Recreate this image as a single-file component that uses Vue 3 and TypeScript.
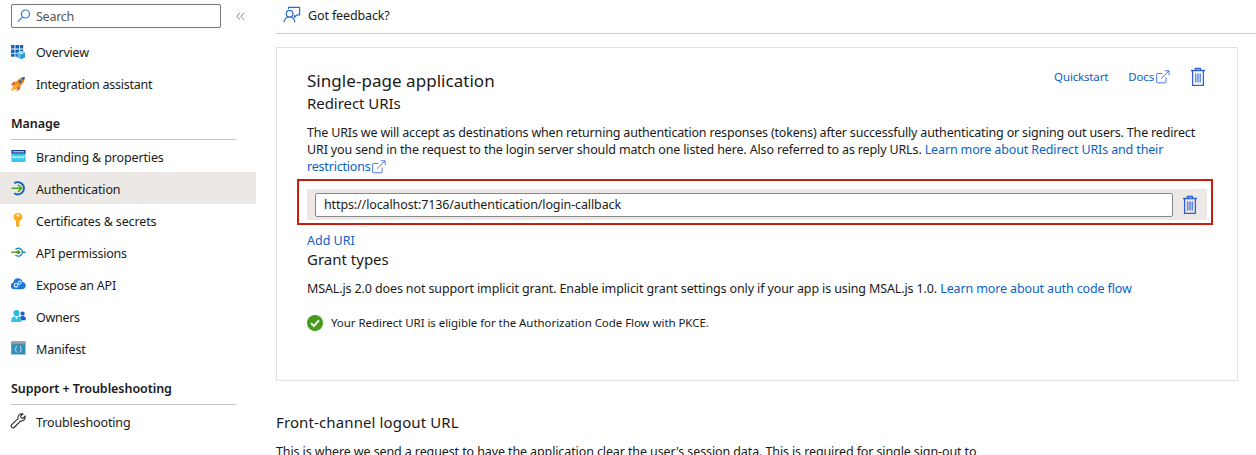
<script setup lang="ts">
interface NavItem {
  label: string
  icon: string
  spacing: number
  active?: boolean
}

const topItems: NavItem[] = [
  { label: 'Overview', icon: 'overview', spacing: -0.22 },
  { label: 'Integration assistant', icon: 'rocket', spacing: -0.24 },
]
const manageItems: NavItem[] = [
  { label: 'Branding & properties', icon: 'branding', spacing: -0.14 },
  { label: 'Authentication', icon: 'auth', spacing: -0.15, active: true },
  { label: 'Certificates & secrets', icon: 'key', spacing: -0.12 },
  { label: 'API permissions', icon: 'api', spacing: -0.24 },
  { label: 'Expose an API', icon: 'cloud', spacing: -0.23 },
  { label: 'Owners', icon: 'owners', spacing: -0.3 },
  { label: 'Manifest', icon: 'manifest', spacing: -0.2 },
]
const supportItems: NavItem[] = [{ label: 'Troubleshooting', icon: 'wrench', spacing: -0.13 }]

const sections = [
  { id: 'top', title: '', items: topItems },
  { id: 'manage', title: 'Manage', items: manageItems },
  { id: 'support', title: 'Support + Troubleshooting', items: supportItems },
]
</script>

<template>
  <svg class="defs" aria-hidden="true">
    <symbol id="trash" viewBox="0 0 16 20">
      <g fill="none" stroke="#2f62d9" stroke-width="1.3">
        <path d="M1 3.5H15M5.500 3.300V1.500H10.500V3.300M2.600 3.500V18.300H13.400V3.500" />
        <path d="M5.800 6.500V15.500M8 6.500V15.500M10.200 6.500V15.500" stroke-width="1.100" />
      </g>
    </symbol>
    <symbol id="external" viewBox="0 0 14 14">
      <path
        d="M6.300 3.400H1.500Q.7 3.400 .7 4.200V12Q.7 12.800 1.500 12.800H9.300Q10.100 12.800 10.100 12V7.400M5 8.700L12.900.9M8.700.8H13.100V5.100"
        fill="none"
        stroke="#4a78dc"
        stroke-width="1"
      />
    </symbol>
  </svg>

  <div class="page">
    <aside class="sidebar">
      <div class="search-row">
        <div class="search">
          <svg width="14" height="14" viewBox="0 0 14 14">
            <g fill="none" stroke="#3478d6" stroke-width="1.2">
              <circle cx="8.500" cy="5" r="4" />
              <path d="M5.600 7.900L.8 12.700" />
            </g>
          </svg>
          <span>Search</span>
        </div>
        <svg class="collapse" width="9" height="9" viewBox="0 0 9 9">
          <path d="M4 .7L.8 4.300L4 7.900M8 .7L4.800 4.300L8 7.900" fill="none" stroke="#777" stroke-width=".9" />
        </svg>
      </div>

      <nav v-for="section in sections" :key="section.id" :class="['section', section.id]">
        <h4 v-if="section.title">{{ section.title }}</h4>
        <div v-for="item in section.items" :key="item.label" :class="['item', { active: item.active }]">
          <svg width="16" height="16" viewBox="0 0 16 16">
            <g v-if="item.icon === 'overview'">
              <path
                d="M1 1h3.600v3.600H1zM5.400 1H9v3.600H5.400zM9.800 1h3.400v3.600H9.800zM1 5.400h3.600V9H1zM5.400 5.400H9V9H5.400zM9.800 5.400h3.400V9H9.800zM1 9.800h3.600v3H1zM5.400 9.800H9v3H5.400z"
                fill="#1765b5"
              />
              <path d="M11 6.700l4 2v4.500l-4 2-4-2V8.700z" fill="#55b5e8" />
              <path d="M11 6.700l4 2-4 2-4-2z" fill="#9edcf7" />
              <path d="M11 10.700l4-2v4.500l-4 2z" fill="#2d99d8" />
            </g>
            <g v-else-if="item.icon === 'rocket'">
              <path d="M2 11.500L.8 15.300L5.300 13.800z" fill="#fcbf2c" />
              <path d="M6 5.400L2.600 6.600L.9 9.800L4.700 9zM10.600 9.900L9.800 13.300L6.500 15.300L7.200 11.400z" fill="#e4572e" />
              <path d="M14.800 1C10.500 1.200 7 3.500 3.600 9.400L2.600 11.500L4.800 13.500L7 12.300C12.500 9 14.800 5.500 14.800 1z" fill="#f58b1f" />
              <path d="M14.900.9L10.900 1.900L13.800 5z" fill="#1665bd" />
              <circle cx="10.200" cy="5.600" r="1.600" fill="#1b65b4" />
              <path d="M7.300 8.600L3.500 12.600" stroke="#fcce45" stroke-width="1.200" />
            </g>
            <g v-else-if="item.icon === 'branding'">
              <path d="M1.500 2h14v12H1.500z" fill="#32cbef" />
              <path d="M1.500 2h14v3.500H1.500z" fill="#183b91" />
              <path d="M2.800 3.300h11.400v1H2.800z" fill="#e9f3ff" />
              <path
                d="M2.500 8l.9 2.200.9-2 .9 2 .8-2.200M6.700 8l.9 2.200.9-2 .9 2 .8-2.200M10.900 8l.9 2.200.9-2 .9 2 .9-2.200"
                fill="none"
                stroke="#dff8ff"
                stroke-width=".8"
              />
            </g>
            <g v-else-if="item.icon === 'auth'" fill="none">
              <path d="M4.300 3.300A6.100 6.100 0 1 1 4.300 13.300" stroke="#1562bd" stroke-width="2" />
              <path d="M1.500 8.300H11.500M8 4.700L11.600 8.300L8 11.900" stroke="#4ba51c" stroke-width="1.600" />
            </g>
            <g v-else-if="item.icon === 'key'">
              <path
                d="M8 .8C5.500.8 3.500 2.600 3.500 5C3.500 6.800 4.500 7.900 6 8.700V13.700L8 15.500L9.900 13.600L8.900 12.600L9.900 11.600L8.900 10.600L10 9.500V8.700C11.500 7.900 12.500 6.800 12.500 5C12.500 2.600 10.500.8 8 .8z"
                fill="#fbb429"
              />
              <circle cx="8" cy="3.200" r="1.200" fill="#fff5d4" />
              <path d="M5.700 6.300H10.300M7.200 9V13.500" stroke="#ed931c" stroke-width=".8" />
            </g>
            <g v-else-if="item.icon === 'api'" fill="none">
              <path d="M5.400 5.500A4 4 0 1 1 5.400 10.900M12.300 8.200H15.600" stroke="#2488b9" stroke-width="1.400" />
              <path d="M1.200 8.200H7" stroke="#58a32c" stroke-width="1.500" />
              <circle cx="8.300" cy="8.200" r="1.900" fill="#4c9c2a" />
            </g>
            <g v-else-if="item.icon === 'cloud'">
              <path
                d="M4 13.200C1.800 13.200.9 11.700.9 9.900C.9 8.200 1.700 7 3.200 6.800C3.400 4.200 5.400 2.300 8 2.300C10.300 2.300 12 3.900 12.700 6.100C14.500 6.400 15.800 7.800 15.800 9.500C15.800 11.600 14 13.200 11.900 13.200z"
                fill="#2275d7"
              />
              <circle cx="6.100" cy="9.300" r="1.800" fill="none" stroke="#e6f4ff" stroke-width="1.200" />
              <circle cx="9.700" cy="6.600" r="1.500" fill="none" stroke="#b6e1ff" stroke-width="1.100" />
            </g>
            <g v-else-if="item.icon === 'owners'">
              <circle cx="12.600" cy="5.600" r="2.100" fill="#255bc7" />
              <path d="M9.300 12.200V11C9.300 9.200 10.700 8 12.600 8S15.800 9.200 15.800 11V12.200z" fill="#1e5ac7" />
              <circle cx="6.500" cy="5" r="3.100" fill="#2bb9df" />
              <path d="M1.200 14V12C1.200 9.500 3.300 8 6.500 8S11.500 9.500 11.500 12V14z" fill="#35c3e8" />
              <path d="M4.800 8.100L6.500 11.500L8.200 8.100z" fill="#e6faff" />
            </g>
            <g v-else-if="item.icon === 'manifest'">
              <path d="M1.200 1.500h14.300v13H1.200z" fill="#348eb9" />
              <path d="M1.200 1.500h14.300v2.700H1.200z" fill="#999b9d" />
              <path
                d="M6.800 6.500Q5.800 6.500 5.800 7.500V8.500L5.100 9.300L5.800 10.100V11.100Q5.800 12.100 6.800 12.100M9.800 6.500Q10.800 6.500 10.800 7.500V8.500L11.500 9.300L10.800 10.100V11.100Q10.800 12.100 9.800 12.100"
                fill="none"
                stroke="#d8f1fb"
                stroke-width=".9"
              />
            </g>
            <path
              v-else
              d="M8 5.600A4 4 0 0 1 12.900 1L10.700 3.200L11.200 4.900L12.900 5.400L15.100 3.200A4.100 4.100 0 0 1 10.400 8.100L4.200 14.500A1.900 1.900 0 0 1 1.500 11.900z"
              fill="none"
              stroke="#2b2b2b"
              stroke-width="1.1"
            />
          </svg>
          <span :style="{ letterSpacing: item.spacing + 'px' }">{{ item.label }}</span>
        </div>
      </nav>
    </aside>

    <main class="content">
      <header class="toolbar">
        <svg width="18" height="18" viewBox="0 0 18 18">
          <g fill="none" stroke="#2d6bd1" stroke-width="1.200">
            <circle cx="6.600" cy="7.700" r="3.300" />
            <path d="M1 16.300C1.300 13.200 3.500 11 6.600 11S11.600 13.200 11.900 16.300M5.500 3.100V1.300H16.600V8.900H14.300L11.500 11.300V8.900" />
          </g>
        </svg>
        <span>Got feedback?</span>
      </header>

      <section class="card">
        <div class="card-head">
          <h2>Single-page application</h2>
          <div class="actions">
            <a class="quick">Quickstart</a>
            <a class="docs"><span>Docs</span><svg width="14" height="14"><use href="#external" /></svg></a>
            <svg class="bin" width="16" height="20"><use href="#trash" /></svg>
          </div>
        </div>
        <h3 class="redirect">Redirect URIs</h3>
        <p class="intro">
          <span class="l1">The URIs we will accept as destinations when returning authentication responses (tokens) after successfully authenticating or signing out users. The redirect</span><br />
          <span class="l2">URI you send in the request to the login server should match one listed here. Also referred to as reply URLs. <a>Learn more about Redirect URIs and their</a></span><br />
          <a class="l3">restrictions<svg width="14" height="14"><use href="#external" /></svg></a>
        </p>
        <div class="highlight">
          <div class="uri-row">
            <div class="uri"><span>https://localhost:7136/authentication/login-callback</span></div>
            <svg width="16" height="20"><use href="#trash" /></svg>
          </div>
        </div>
        <a class="add">Add URI</a>
        <h3 class="grant">Grant types</h3>
        <p class="msal">MSAL.js 2.0 does not support implicit grant. Enable implicit grant settings only if your app is using MSAL.js 1.0. <a>Learn more about auth code flow</a></p>
        <div class="status">
          <svg width="16" height="16" viewBox="0 0 16 16">
            <circle cx="8" cy="8" r="8" fill="#459b1c" />
            <path d="M4 8.200L6.800 11L12 5.300" fill="none" stroke="#fff" stroke-width="1.900" />
          </svg>
          <span>Your Redirect URI is eligible for the Authorization Code Flow with PKCE.</span>
        </div>
      </section>

      <h3 class="logout">Front-channel logout URL</h3>
      <p class="logout-text">This is where we send a request to have the application clear the user's session data. This is required for single sign-out to</p>
    </main>
  </div>
</template>

<style>
body {
  overflow: hidden;
  background: #fff;
}
</style>

<style scoped>
.page,
.page * {
  box-sizing: border-box;
}
.defs {
  position: absolute;
  width: 0;
  height: 0;
}
.page {
  display: flex;
  width: 1256px;
  height: 455px;
  overflow: hidden;
  color: #1b1a19;
  font-family: "Noto Sans", "Open Sans", sans-serif;
  font-size: 12.5px;
  line-height: 17px;
  white-space: nowrap;
}
h2,
h3,
h4,
p {
  margin: 0;
  font-weight: 400;
}
a {
  color: #0b62c6;
}
svg {
  display: block;
  flex: none;
}
.sidebar {
  width: 256px;
  flex: none;
}
.search-row {
  display: flex;
  align-items: center;
  height: 36px;
  padding: 0 0 4px 11px;
}
.search {
  display: flex;
  align-items: center;
  gap: 5px;
  width: 210px;
  height: 24px;
  padding-left: 5px;
  border: 1px solid #777;
  border-radius: 2px;
  color: #555;
  letter-spacing: -0.25px;
}
.collapse {
  margin-left: 15px;
}
.item {
  display: flex;
  align-items: center;
  gap: 10px;
  height: 32px;
  padding-left: 10px;
}
.manage .item span,
.support .item span {
  padding-top: 2px;
}
.item.active {
  background: #ebe8e6;
}
h4 {
  width: 225px;
  height: 40px;
  margin-left: 11px;
  padding-top: 15px;
  border-bottom: 1px solid #c2c5c8;
  font-weight: 600;
  line-height: 17px;
  letter-spacing: -0.06px;
}
.support h4 {
  height: 41px;
  padding-top: 16px;
}
.content {
  width: 980px;
  flex: none;
  margin-left: 20px;
}
.toolbar {
  display: flex;
  align-items: center;
  gap: 7px;
  height: 34px;
  padding: 0 0 3px 7px;
  border-bottom: 1px solid #ccc;
  letter-spacing: -0.13px;
}
.toolbar span {
  padding-top: 1px;
}
.card {
  width: 962px;
  height: 334px;
  margin-top: 13px;
  padding: 21px 25px 0 30px;
  border: 1px solid #e1e1e1;
}
.card-head {
  display: flex;
  justify-content: space-between;
  height: 23px;
}
h2 {
  font-size: 17px;
  line-height: 24px;
  letter-spacing: 0.04px;
}
h3 {
  font-size: 15px;
  line-height: 22px;
}
.redirect {
  letter-spacing: -0.05px;
}
.actions {
  display: flex;
  align-items: center;
  height: 20px;
  margin: -2px 6px 0 0;
  font-size: 11.5px;
  letter-spacing: -0.16px;
}
.quick,
.docs span {
  padding-bottom: 2px;
}
.docs {
  display: flex;
  align-items: center;
  margin-left: 20px;
}
.docs svg {
  margin-left: 2px;
}
.bin {
  margin-left: 20px;
}
.intro {
  margin-top: 10px;
}
.l1 {
  letter-spacing: -0.176px;
}
.l2 {
  letter-spacing: -0.141px;
}
.l3 {
  display: inline-flex;
  align-items: center;
  height: 17px;
  letter-spacing: -0.2px;
}
.l3 svg {
  margin-left: 2px;
}
.highlight {
  width: 916px;
  height: 46px;
  margin: 4px 0 0 -10px;
  padding: 8px 4px 0 8px;
  border: 2px solid #c91d10;
}
.uri-row {
  display: flex;
  align-items: center;
  height: 31px;
  padding-left: 8px;
  background: #ebe8e6;
}
.uri {
  display: flex;
  align-items: center;
  width: 858px;
  height: 24px;
  margin-right: 9px;
  padding-left: 8px;
  border: 1px solid #888;
  border-radius: 2px;
  background: #fff;
  letter-spacing: -0.115px;
}
.add {
  display: block;
  margin-top: 7px;
}
.grant {
  height: 22px;
  margin-top: -1px;
}
.msal {
  margin-top: 10px;
  letter-spacing: -0.125px;
}
.status {
  display: flex;
  align-items: center;
  gap: 8px;
  margin-top: 17px;
  font-size: 11.5px;
  letter-spacing: -0.06px;
}
.logout {
  margin-top: 30px;
  letter-spacing: 0.12px;
}
.logout-text {
  margin-top: 10px;
  letter-spacing: -0.11px;
}
</style>
